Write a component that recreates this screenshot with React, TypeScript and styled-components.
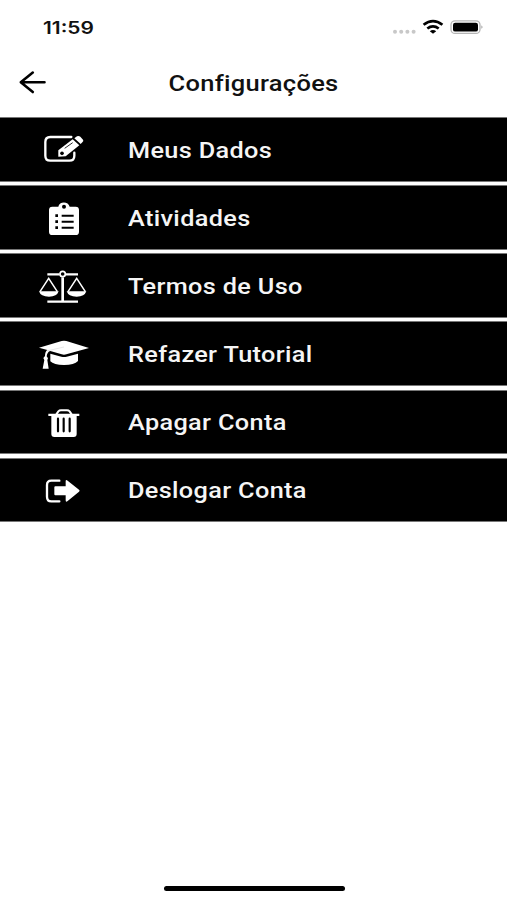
import React from "react";
import styled, { createGlobalStyle } from "styled-components";

const GlobalStyle = createGlobalStyle`
  * { box-sizing: border-box; }
  body { margin: 0; background: #fff; font-family: Roboto, sans-serif; }
`;

const Screen = styled.div`
  width: 507px;
  height: 900px;
  display: flex;
  flex-direction: column;
  background: #fff;
  overflow: hidden;
`;

const StatusBar = styled.div`
  height: 54px;
  flex: none;
  display: flex;
  justify-content: space-between;
  padding: 0 22px 0 43px;
`;

const Clock = styled.time`
  font: 600 17px/56px Inter, sans-serif;
  color: #111;
  white-space: nowrap;
  transform: scaleX(1.23);
  transform-origin: left center;
`;

const StatusIcons = styled.svg`
  width: 95px;
  height: 54px;
  display: block;
`;

const Header = styled.header`
  height: 63.2px;
  flex: none;
  display: grid;
  grid-template-columns: 64px 1fr 64px;
`;

const BackButton = styled.button`
  border: 0;
  padding: 0;
  background: none;
  height: 56px;
`;

const BackIcon = styled.svg`
  width: 64px;
  height: 56px;
  display: block;
`;

const Title = styled.h1`
  margin: 0;
  text-align: center;
  font-size: 21.5px;
  font-weight: 500;
  line-height: 59px;
  color: #111;
  letter-spacing: 0.25px;
  transform: scaleX(1.185);
`;

const Menu = styled.nav`
  display: flex;
  flex-direction: column;
  gap: 3.5px;
`;

const MenuRow = styled.button`
  height: 64.6px;
  width: 100%;
  padding: 0;
  border: solid #777;
  border-width: 1px 0;
  display: flex;
  align-items: center;
  background: #000;
  color: #fff;
`;

const MenuIcon = styled.svg`
  width: 128px;
  height: 64px;
  flex: none;
  display: block;
`;

const Label = styled.span`
  font: 500 21.5px/64px Roboto, sans-serif;
  padding-top: 3px;
  white-space: nowrap;
  letter-spacing: 0.3px;
  color: #f5f5f5;
  transform: scaleX(1.175);
  transform-origin: left center;
`;

const Footer = styled.footer`
  margin-top: auto;
  height: 14.5px;
  display: flex;
  justify-content: center;
`;

const HomeIndicator = styled.div`
  width: 181px;
  height: 5px;
  margin-left: 1px;
  border-radius: 3px;
  background: #000;
`;

const EditArt = () => (
  <>
    <path d="M154 81H91Q76 81 76 96V137Q76 152 91 152H148Q163 152 163 137V128" fill="none" stroke="#fff" strokeWidth="7" strokeLinecap="round" />
    <path d="M115 140V121L158 88L178 106L137 139Z" fill="#fff" />
    <path d="M163 85L171 79Q176 76 181 80L189 89Q192 93 187 97L182 102Z" fill="#fff" />
    <path d="M134 115L158 98" stroke="#000" strokeWidth="2.5" />
    <circle cx="126" cy="130" r="5.5" fill="#000" />
  </>
);

const ClipboardArt = () => (
  <>
    <path d="M97 287H115C117 270 146 270 149 287H167Q177 287 177 297V362Q177 372 167 372H97Q87 372 87 362V297Q87 287 97 287Z" fill="#fff" />
    <circle cx="132" cy="287" r="6" fill="#000" />
    <path d="M125 314H161M125 332H161M125 350H161" stroke="#000" strokeWidth="6" />
    <path d="M106 314H114M106 332H114M106 350H114" stroke="#000" strokeWidth="8" />
  </>
);

const ScalesArt = () => (
  <>
    <g fill="none" stroke="#fff">
      <path d="M82 71H119M137 71H174M82 153H174" strokeWidth="7" />
      <path d="M128 80V151" strokeWidth="8" />
      <circle cx="128" cy="70" r="8" strokeWidth="5" />
      <path d="M60 123L86 83L112 123M144 123L170 83L196 123" strokeWidth="4.5" />
    </g>
    <path d="M57 122H116Q111 138 87 138Q62 138 57 122ZM140 122H199Q194 138 170 138Q145 138 140 122Z" fill="#fff" />
  </>
);

const GraduationArt = () => (
  <>
    <path d="M57 291L125 271Q132 269 139 271L207 292L139 311Q132 313 125 311L91 301Q82 303 80 317L84 323L82 328L86 354H68L73 328L70 322L75 316Q75 303 82 298Z" fill="#fff" />
    <path d="M91 309L124 318Q132 320 140 318L174 309V331Q163 343 132 343Q101 343 91 332Z" fill="#fff" />
    <path d="M80 301L132 289" stroke="#ddd" strokeWidth="2" />
  </>
);

const TrashArt = () => (
  <>
    <path d="M109 86L115 77Q118 74 123 74H141Q146 74 149 77L155 86" fill="none" stroke="#fff" strokeWidth="6" />
    <path d="M85 84H178V91H170V145Q170 154 161 154H103Q94 154 94 145V91H85Z" fill="#fff" />
    <path d="M114 99V137M131 99V137M149 99V137" stroke="#000" strokeWidth="6.5" strokeLinecap="round" />
  </>
);

const LogoutArt = () => (
  <>
    <path d="M118 285H94Q81 285 81 298V333Q81 347 94 347H118" fill="none" stroke="#fff" strokeWidth="7" strokeLinecap="round" />
    <path d="M103 305Q103 302 106 302H137V287Q137 280 143 285L177 312Q181 315 177 318L143 346Q137 351 137 344V329H106Q103 329 103 326Z" fill="#fff" />
  </>
);

const items = [
  { label: "Meus Dados", top: 21, Art: EditArt },
  { label: "Atividades", top: 225, Art: ClipboardArt },
  { label: "Termos de Uso", top: 10, Art: ScalesArt },
  { label: "Refazer Tutorial", top: 214, Art: GraduationArt },
  { label: "Apagar Conta", top: 13, Art: TrashArt },
  { label: "Deslogar Conta", top: 217, Art: LogoutArt },
];

export default function App() {
  return (
    <Screen>
      <GlobalStyle />
      <StatusBar>
        <Clock>11:59</Clock>
        <StatusIcons viewBox="390 0 95 54">
          <g fill="#c8c8c8">
            <circle cx="395" cy="31.7" r="2" />
            <circle cx="401.2" cy="31.7" r="2" />
            <circle cx="407.4" cy="31.7" r="2" />
            <circle cx="413.6" cy="31.7" r="2" />
          </g>
          <g fill="none" stroke="#000" strokeWidth="2.7">
            <path d="M423.6 24.8Q433 17.4 442.4 24.8" />
            <path d="M427.3 28.5Q433 24.2 438.7 28.5" />
          </g>
          <path d="M429.8 31.2Q433 28.8 436.2 31.2L433 33.8Z" fill="#000" />
          <rect x="451" y="20.8" width="29" height="12.6" rx="4" fill="#fff" stroke="#b5b5b5" strokeWidth="1.3" />
          <rect x="453" y="22.8" width="25" height="8.8" rx="2.2" fill="#000" />
          <path d="M481.5 25.2Q483.4 27 481.5 28.8Z" fill="#888" />
        </StatusIcons>
      </StatusBar>
      <Header>
        <BackButton aria-label="Voltar">
          <BackIcon viewBox="0 54 64 56">
            <path d="M44.5 82.2H21M32.8 72.6L20.8 82.2L32.8 92" fill="none" stroke="#000" strokeWidth="2.6" strokeLinecap="round" strokeLinejoin="round" />
          </BackIcon>
        </BackButton>
        <Title>Configurações</Title>
      </Header>
      <Menu>
        {items.map(({ label, top, Art }) => (
          <MenuRow key={label}>
            <MenuIcon viewBox={`-60 ${top} 384 192`} aria-hidden="true">
              <Art />
            </MenuIcon>
            <Label>{label}</Label>
          </MenuRow>
        ))}
      </Menu>
      <Footer>
        <HomeIndicator />
      </Footer>
    </Screen>
  );
}
